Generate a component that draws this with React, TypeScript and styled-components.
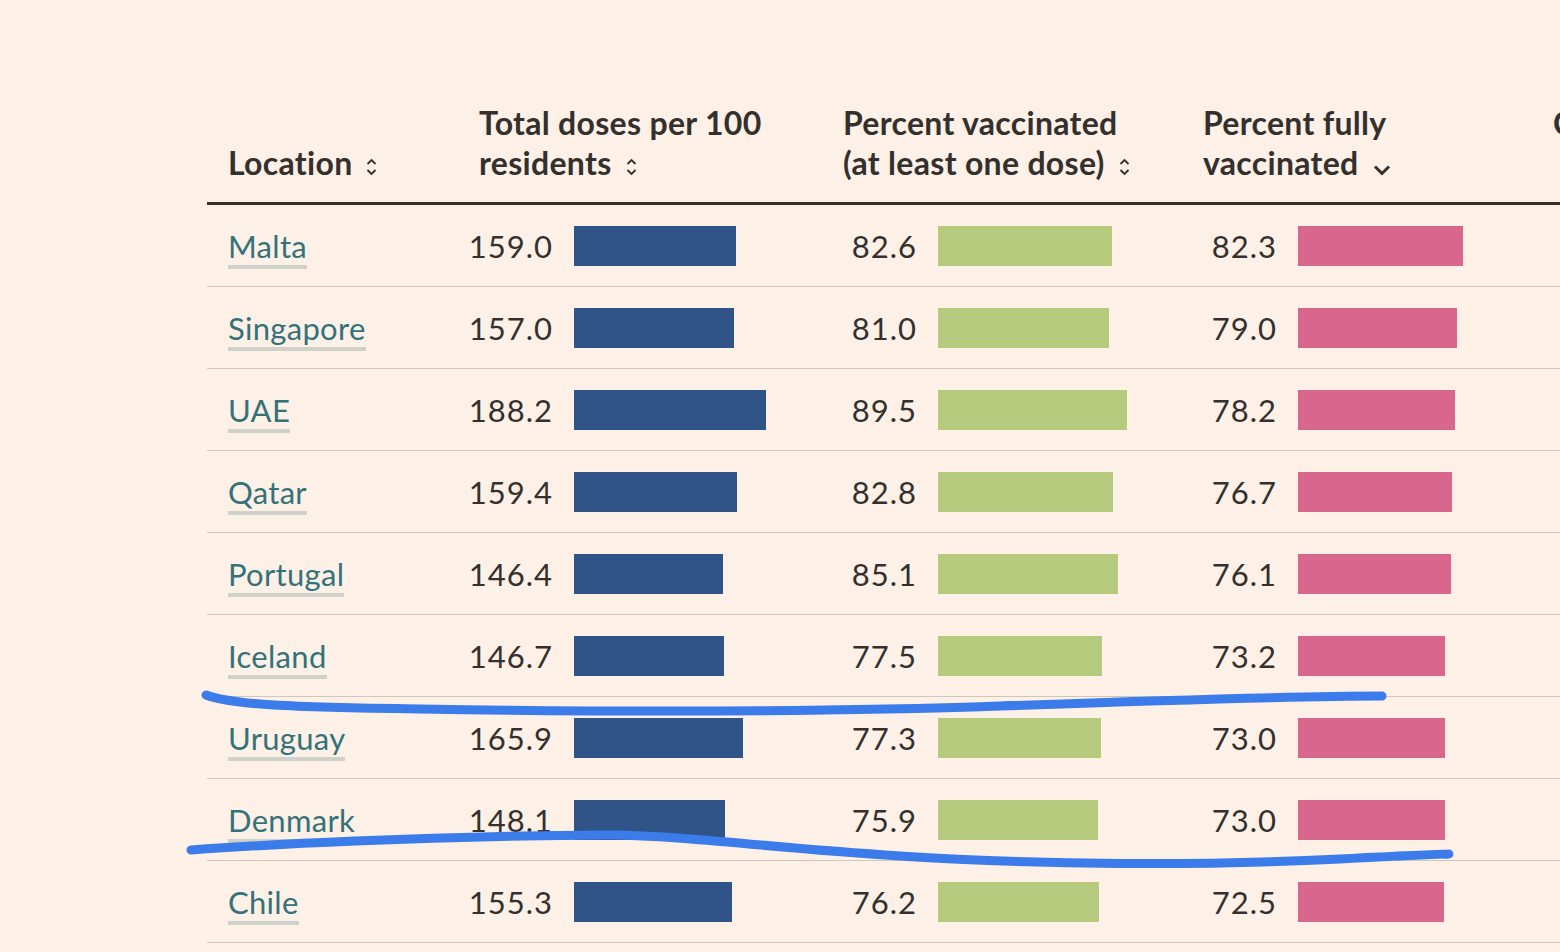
import styled, { createGlobalStyle } from 'styled-components';

const GlobalStyle = createGlobalStyle`
  html, body {
    margin: 0;
    padding: 0;
    background: #fdf0e6;
    overflow: hidden;
  }
`;

const COLUMNS = '251px 364px 360px 350px 1fr';

const Page = styled.div`
  position: relative;
  width: 1560px;
  height: 952px;
  box-sizing: border-box;
  padding: 103px 0 0 207px;
  overflow: hidden;
  background: #fdf0e6;
  font-family: Lato, 'Open Sans', sans-serif;
  color: #33302e;
`;

const Table = styled.div`
  width: 1500px;
`;

const HeadRow = styled.div`
  display: grid;
  grid-template-columns: ${COLUMNS};
  align-items: end;
  padding-bottom: 19px;
  border-bottom: 3px solid #33302e;
`;

const HeadCell = styled.div`
  padding-left: 21px;
  font-size: 32px;
  font-weight: 700;
  line-height: 40px;
  white-space: nowrap;
  letter-spacing: 0.3px;
`;

const SortIcon = styled.svg`
  display: inline-block;
  margin-left: 14px;
  vertical-align: -1px;
`;

const Row = styled.div`
  display: grid;
  grid-template-columns: ${COLUMNS};
  align-items: center;
  height: 82px;
  box-sizing: border-box;
  border-bottom: 1px solid #d2c6bb;
`;

const LocationCell = styled.div`
  padding-left: 21px;
  padding-top: 5px;
`;

const LocationLink = styled.a`
  display: inline-block;
  font-size: 31px;
  line-height: 38px;
  letter-spacing: 0.3px;
  color: #34727a;
  text-decoration: none;
  border-bottom: 4px solid #cfd2cb;
`;

const ValueCell = styled.div`
  display: flex;
  align-items: center;
  gap: 21px;
`;

const Num = styled.span`
  width: 95px;
  text-align: right;
  font-size: 31px;
  letter-spacing: 1px;
  color: #33302e;
`;

const Bar = styled.div<{ $color: string }>`
  height: 40px;
  background: ${({ $color }) => $color};
`;

const Scribbles = styled.svg`
  position: absolute;
  left: 0;
  top: 0;
  pointer-events: none;
`;

type Entry = { name: string; doses: number; one: number; full: number };

const data: Entry[] = [
  { name: 'Malta', doses: 159.0, one: 82.6, full: 82.3 },
  { name: 'Singapore', doses: 157.0, one: 81.0, full: 79.0 },
  { name: 'UAE', doses: 188.2, one: 89.5, full: 78.2 },
  { name: 'Qatar', doses: 159.4, one: 82.8, full: 76.7 },
  { name: 'Portugal', doses: 146.4, one: 85.1, full: 76.1 },
  { name: 'Iceland', doses: 146.7, one: 77.5, full: 73.2 },
  { name: 'Uruguay', doses: 165.9, one: 77.3, full: 73.0 },
  { name: 'Denmark', doses: 148.1, one: 75.9, full: 73.0 },
  { name: 'Chile', doses: 155.3, one: 76.2, full: 72.5 },
];

function Sort() {
  return (
    <SortIcon width="11" height="18" viewBox="0 0 11 18">
      <path d="M1.5 6 L5.5 2 L9.5 6 M1.5 12 L5.5 16 L9.5 12" fill="none" stroke="#33302e" strokeWidth="1.8" />
    </SortIcon>
  );
}

function SortDown() {
  return (
    <SortIcon width="18" height="12" viewBox="0 0 18 12">
      <path d="M2 2.5 L9 9.5 L16 2.5" fill="none" stroke="#33302e" strokeWidth="3" />
    </SortIcon>
  );
}

function Value({ value, scale, color }: { value: number; scale: number; color: string }) {
  return (
    <ValueCell>
      <Num>{value.toFixed(1)}</Num>
      <Bar $color={color} style={{ width: `${Math.round(value * scale)}px` }} />
    </ValueCell>
  );
}

export default function App() {
  return (
    <Page>
      <GlobalStyle />
      <Table>
        <HeadRow>
          <HeadCell>
            Location
            <Sort />
          </HeadCell>
          <HeadCell>
            Total doses per 100
            <br />
            residents
            <Sort />
          </HeadCell>
          <HeadCell>
            Percent vaccinated
            <br />
            (at least one dose)
            <Sort />
          </HeadCell>
          <HeadCell>
            Percent fully
            <br />
            vaccinated
            <SortDown />
          </HeadCell>
          <HeadCell>
            Cases per 100k
            <br />
            &nbsp;
          </HeadCell>
        </HeadRow>
        {data.map((d) => (
          <Row key={d.name}>
            <LocationCell>
              <LocationLink href="#">{d.name}</LocationLink>
            </LocationCell>
            <Value value={d.doses} scale={1.02} color="#305488" />
            <Value value={d.one} scale={2.11} color="#b5ca7d" />
            <Value value={d.full} scale={2.01} color="#d8668d" />
            <div />
          </Row>
        ))}
      </Table>
      <Scribbles width="1560" height="952" viewBox="0 0 1560 952">
        <path
          d="M206 695 C 232 705, 290 707, 420 709 S 800 713, 1000 706 S 1300 696, 1382 696"
          fill="none"
          stroke="#3b7bea"
          strokeWidth="9"
          strokeLinecap="round"
        />
        <path
          d="M191 850 C 260 845, 420 836, 610 835 C 690 836, 760 847, 900 856 S 1200 866, 1340 859 S 1430 855, 1449 854"
          fill="none"
          stroke="#3b7bea"
          strokeWidth="9"
          strokeLinecap="round"
        />
      </Scribbles>
    </Page>
  );
}
